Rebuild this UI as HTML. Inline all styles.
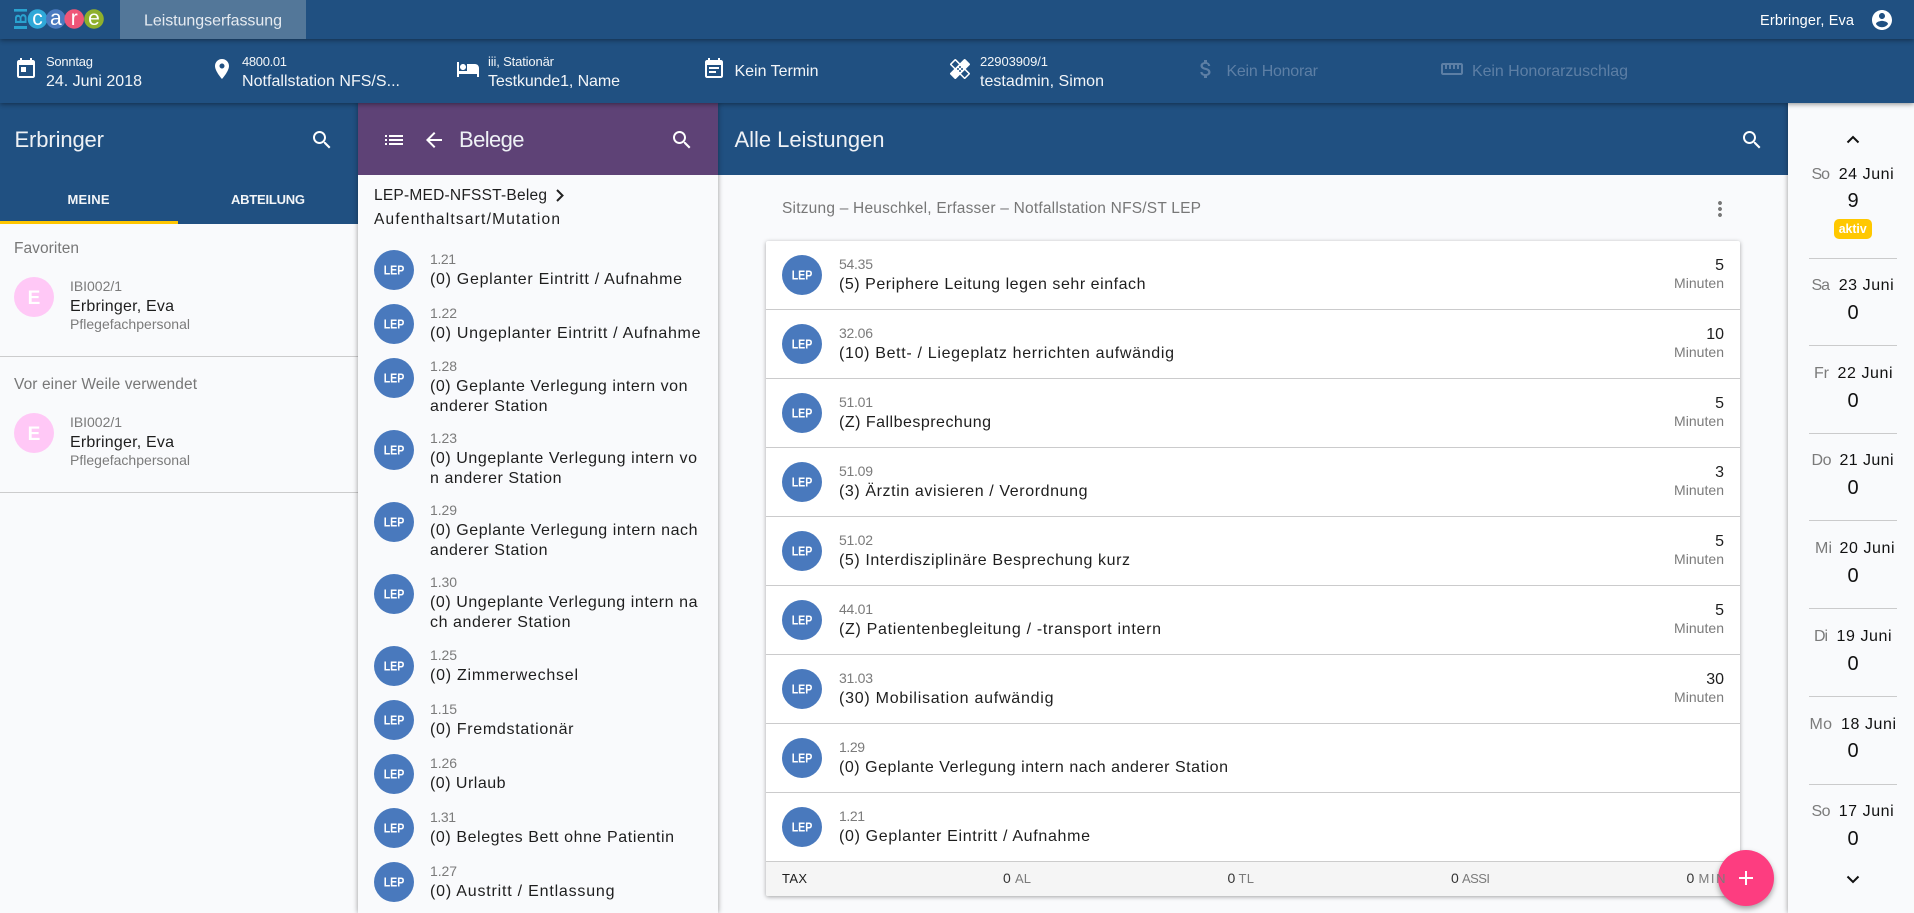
<!DOCTYPE html>
<html lang="de"><head><meta charset="utf-8"><title>Leistungserfassung</title>
<style>
html,body{margin:0;padding:0;width:1914px;height:913px;overflow:hidden;background:#f9fafc;font-family:"Liberation Sans",sans-serif}
.b{position:absolute}
svg.o{position:absolute;left:0;top:0;z-index:20}
text{font-family:"Liberation Sans",sans-serif}
.w{fill:#f2f5f8}.f{fill:#5d7fa5}
.s13{font-size:13px}.s14{font-size:14px}.s15{font-size:15.5px}.s16{font-size:16px}.s20{font-size:20px}.s22{font-size:22px;fill:#eef1f5}
.g{fill:#7b7b7b}.d{fill:#1e1e1e}
.lep{font-size:12.5px;font-weight:bold;fill:#fff;text-anchor:start}
.ic{fill:#fff}
.m{text-anchor:middle}
.e{text-anchor:end}
</style></head><body>
<div class="b" style="left:0;top:0;width:1914px;height:39px;background:#205081;box-shadow:0 1px 5px rgba(0,0,0,.45);z-index:6"></div>
<div class="b" style="left:120px;top:0;width:186px;height:39px;background:#537799;z-index:7"></div>
<div class="b" style="left:0;top:39px;width:1914px;height:64px;background:#205081;box-shadow:0 1px 5px rgba(0,0,0,.45);z-index:5"></div>
<div class="b" style="left:0;top:103px;width:358px;height:121px;background:#205081;z-index:2"></div>
<div class="b" style="left:0;top:221px;width:178px;height:3px;background:#ffc600;z-index:3"></div>
<div class="b" style="left:358px;top:103px;width:360px;height:810px;background:#f9fafc;box-shadow:0 0 5px rgba(0,0,0,.4);z-index:3"></div>
<div class="b" style="left:358px;top:103px;width:360px;height:72px;background:#5e4276;z-index:3"></div>
<div class="b" style="left:718px;top:103px;width:1070px;height:72px;background:#205081;z-index:2"></div>
<div class="b" style="left:1788px;top:103px;width:126px;height:810px;background:#f9fafc;box-shadow:0 0 5px rgba(0,0,0,.4);z-index:3"></div>
<div class="b" style="left:0;top:356px;width:358px;height:1px;background:#cccccd"></div>
<div class="b" style="left:0;top:492px;width:358px;height:1px;background:#cccccd"></div>
<div class="b" style="left:766px;top:241px;width:974px;height:655px;background:#fff;border-radius:2px;box-shadow:0 1px 4px rgba(0,0,0,.35);z-index:1"></div>
<div class="b" style="left:766px;top:861px;width:974px;height:35px;background:#f5f5f5;border-top:1px solid #ccc;box-sizing:border-box;border-radius:0 0 2px 2px;z-index:1"></div>
<div class="b" style="left:1718px;top:850px;width:56px;height:56px;border-radius:50%;background:#fd3d80;box-shadow:0 3px 6px rgba(0,0,0,.35);z-index:10"></div>

<svg class="o" width="1914" height="913" viewBox="0 0 1914 913">
<!-- row dividers -->
<g fill="#cbcbcc"><rect x="766" y="309" width="974" height="1"/><rect x="766" y="378" width="974" height="1"/><rect x="766" y="447" width="974" height="1"/><rect x="766" y="516" width="974" height="1"/><rect x="766" y="585" width="974" height="1"/><rect x="766" y="654" width="974" height="1"/><rect x="766" y="723" width="974" height="1"/><rect x="766" y="792" width="974" height="1"/>
<rect x="1809" y="258" width="88" height="1"/><rect x="1809" y="345" width="88" height="1"/><rect x="1809" y="433" width="88" height="1"/><rect x="1809" y="520" width="88" height="1"/><rect x="1809" y="608" width="88" height="1"/><rect x="1809" y="696" width="88" height="1"/><rect x="1809" y="784" width="88" height="1"/></g>

<!-- logo -->
<g fill="#2aa3d0"><rect x="14" y="9" width="13" height="2.6"/><rect x="14" y="26" width="13" height="3"/>
<text transform="translate(26.5 24) rotate(-90)" font-size="17" font-weight="bold" textLength="10.5" lengthAdjust="spacingAndGlyphs">B</text></g>
<circle cx="37.5" cy="19" r="9.8" fill="#2fa8d8"/><circle cx="55.8" cy="19" r="9.8" fill="#4a7abf"/><circle cx="74.2" cy="19" r="9.8" fill="#ef5578"/><circle cx="94" cy="19" r="9.8" fill="#8fb02c"/>
<g fill="#fff" font-size="21" text-anchor="middle"><text x="37.5" y="25">c</text><text x="55.8" y="25">a</text><text x="74.2" y="25">r</text><text x="94" y="25">e</text></g>

<!-- top bar -->
<text x="144" y="25.5" class="s16" textLength="138" fill="#e6ebf1">Leistungserfassung</text>
<text x="1760" y="25" font-size="14.5" textLength="94" fill="#fff">Erbringer, Eva</text>
<svg x="1870" y="8" width="24" height="24" viewBox="0 0 24 24" class="ic"><path d="M12 2C6.48 2 2 6.48 2 12s4.48 10 10 10 10-4.48 10-10S17.52 2 12 2zm0 3c1.66 0 3 1.34 3 3s-1.34 3-3 3-3-1.34-3-3 1.34-3 3-3zm0 14.2c-2.5 0-4.71-1.28-6-3.22.03-1.99 4-3.08 6-3.08 1.99 0 5.97 1.09 6 3.08-1.29 1.94-3.5 3.22-6 3.22z"/></svg>

<!-- info bar -->
<svg x="14" y="57" width="24" height="24" viewBox="0 0 24 24" class="ic"><path d="M19 3h-1V1h-2v2H8V1H6v2H5c-1.11 0-1.99.9-1.99 2L3 19c0 1.1.89 2 2 2h14c1.1 0 2-.9 2-2V5c0-1.1-.9-2-2-2zm0 16H5V8h14v11zM7 10h5v5H7z"/></svg>
<text x="46" y="66" class="s13 w" textLength="47">Sonntag</text>
<text x="46" y="86" class="s16 w" textLength="96">24. Juni 2018</text>
<svg x="210" y="57" width="24" height="24" viewBox="0 0 24 24" class="ic"><path d="M12 2C8.13 2 5 5.13 5 9c0 5.25 7 13 7 13s7-7.75 7-13c0-3.87-3.13-7-7-7zm0 9.5c-1.38 0-2.5-1.12-2.5-2.5s1.12-2.5 2.5-2.5 2.5 1.12 2.5 2.5-1.12 2.5-2.5 2.5z"/></svg>
<text x="242" y="66" class="s13 w" textLength="45">4800.01</text>
<text x="242" y="86" class="s16 w" textLength="158">Notfallstation NFS/S...</text>
<svg x="456" y="57" width="24" height="24" viewBox="0 0 24 24" class="ic"><path d="M7 13c1.66 0 3-1.34 3-3S8.66 7 7 7s-3 1.34-3 3 1.34 3 3 3zm12-6h-8v7H3V5H1v15h2v-3h18v3h2v-9c0-2.21-1.79-4-4-4z"/></svg>
<text x="488" y="66" class="s13 w" textLength="66">iii, Stationär</text>
<text x="488" y="86" class="s16 w" textLength="132">Testkunde1, Name</text>
<svg x="702" y="57" width="24" height="24" viewBox="0 0 24 24" class="ic"><path d="M17 10H7v2h10v-2zm2-7h-1V1h-2v2H8V1H6v2H5c-1.11 0-1.99.9-1.99 2L3 19c0 1.1.89 2 2 2h14c1.1 0 2-.9 2-2V5c0-1.1-.9-2-2-2zm0 16H5V8h14v11zm-5-5H7v2h7v-2z"/></svg>
<text x="734.5" y="76" class="s16 w" textLength="84">Kein Termin</text>
<svg x="948" y="57" width="24" height="24" viewBox="0 0 24 24" class="ic"><path d="M17.73 12.02l3.98-3.98c.39-.39.39-1.02 0-1.41l-4.34-4.34c-.39-.39-1.02-.39-1.41 0l-3.98 3.98L8 2.29C7.8 2.1 7.55 2 7.29 2c-.25 0-.51.1-.7.29L2.25 6.63c-.39.39-.39 1.02 0 1.41l3.98 3.98L2.25 16c-.39.39-.39 1.02 0 1.41l4.34 4.34c.39.39 1.02.39 1.41 0l3.98-3.98 3.98 3.98c.2.2.45.29.71.29.26 0 .51-.1.71-.29l4.34-4.34c.39-.39.39-1.02 0-1.41l-3.99-3.98zM12 9c.55 0 1 .45 1 1s-.45 1-1 1-1-.45-1-1 .45-1 1-1zm-4.71 1.96L3.66 7.34l3.63-3.63 3.62 3.62-3.62 3.63zM10 13c-.55 0-1-.45-1-1s.45-1 1-1 1 .45 1 1-.45 1-1 1zm2 2c-.55 0-1-.45-1-1s.45-1 1-1 1 .45 1 1-.45 1-1 1zm2-4c.55 0 1 .45 1 1s-.45 1-1 1-1-.45-1-1 .45-1 1-1zm2.66 9.34l-3.63-3.62 3.63-3.63 3.62 3.62-3.62 3.63z"/></svg>
<text x="980" y="66" class="s13 w" textLength="68">22903909/1</text>
<text x="980" y="86" class="s16 w" textLength="124">testadmin, Simon</text>
<svg x="1194" y="57" width="24" height="24" viewBox="0 0 24 24" fill="#5d7fa5"><path d="M11.8 10.9c-2.27-.59-3-1.2-3-2.15 0-1.09 1.01-1.85 2.7-1.85 1.78 0 2.44.85 2.5 2.1h2.21c-.07-1.72-1.12-3.3-3.21-3.81V3h-3v2.16c-1.94.42-3.5 1.68-3.5 3.61 0 2.31 1.91 3.46 4.7 4.13 2.5.6 3 1.48 3 2.41 0 .69-.49 1.79-2.7 1.79-2.06 0-2.87-.92-2.98-2.1h-2.2c.12 2.19 1.76 3.42 3.68 3.83V21h3v-2.15c1.95-.37 3.5-1.5 3.5-3.55 0-2.84-2.43-3.81-4.7-4.4z"/></svg>
<text x="1226.5" y="76" class="s16 f" textLength="91.5">Kein Honorar</text>
<svg x="1440" y="57" width="24" height="24" viewBox="0 0 24 24" fill="#5d7fa5"><path d="M21 6H3c-1.1 0-2 .9-2 2v8c0 1.1.9 2 2 2h18c1.1 0 2-.9 2-2V8c0-1.1-.9-2-2-2zm0 10H3V8h2v4h2V8h2v4h2V8h2v4h2V8h2v4h2V8h2v8z"/></svg>
<text x="1472" y="76" class="s16 f" textLength="156">Kein Honorarzuschlag</text>

<!-- panel headers -->
<text x="14.5" y="147" class="s22" textLength="89.5">Erbringer</text>
<svg x="310" y="128" width="24" height="24" viewBox="0 0 24 24" class="ic"><path d="M15.5 14h-.79l-.28-.27C15.41 12.59 16 11.11 16 9.5 16 5.91 13.09 3 9.5 3S3 5.91 3 9.5 5.91 16 9.5 16c1.61 0 3.09-.59 4.23-1.57l.27.28v.79l5 4.99L20.49 19l-4.99-5zm-6 0C7.01 14 5 11.99 5 9.5S7.01 5 9.5 5 14 7.01 14 9.5 11.99 14 9.5 14z"/></svg>
<text x="67.5" y="204" class="s13" font-weight="bold" fill="#f2f5f8" textLength="42">MEINE</text>
<text x="231" y="204" class="s13" font-weight="bold" fill="#f2f5f8" textLength="74">ABTEILUNG</text>
<svg x="382" y="128" width="24" height="24" viewBox="0 0 24 24" class="ic"><path d="M3 13h2v-2H3v2zm0 4h2v-2H3v2zm0-8h2V7H3v2zm4 4h14v-2H7v2zm0 4h14v-2H7v2zM7 7v2h14V7H7z"/></svg>
<svg x="422" y="128" width="24" height="24" viewBox="0 0 24 24" class="ic"><path d="M20 11H7.83l5.59-5.59L12 4l-8 8 8 8 1.41-1.41L7.83 13H20v-2z"/></svg>
<text x="459" y="147" class="s22" textLength="65.5">Belege</text>
<svg x="670" y="128" width="24" height="24" viewBox="0 0 24 24" class="ic"><path d="M15.5 14h-.79l-.28-.27C15.41 12.59 16 11.11 16 9.5 16 5.91 13.09 3 9.5 3S3 5.91 3 9.5 5.91 16 9.5 16c1.61 0 3.09-.59 4.23-1.57l.27.28v.79l5 4.99L20.49 19l-4.99-5zm-6 0C7.01 14 5 11.99 5 9.5S7.01 5 9.5 5 14 7.01 14 9.5 11.99 14 9.5 14z"/></svg>
<text x="734.5" y="147" class="s22" textLength="150">Alle Leistungen</text>
<svg x="1740" y="128" width="24" height="24" viewBox="0 0 24 24" class="ic"><path d="M15.5 14h-.79l-.28-.27C15.41 12.59 16 11.11 16 9.5 16 5.91 13.09 3 9.5 3S3 5.91 3 9.5 5.91 16 9.5 16c1.61 0 3.09-.59 4.23-1.57l.27.28v.79l5 4.99L20.49 19l-4.99-5zm-6 0C7.01 14 5 11.99 5 9.5S7.01 5 9.5 5 14 7.01 14 9.5 11.99 14 9.5 14z"/></svg>

<!-- col 1 -->
<text x="14" y="253" class="s15" fill="#777" textLength="65">Favoriten</text>
<circle cx="34" cy="297" r="20" fill="#ffc8f6"/><text x="34" y="304" font-size="19" class="m" fill="#fff" font-weight="bold">E</text>
<text x="70" y="291" class="s14 g" textLength="52">IBI002/1</text>
<text x="70" y="311" class="s16 d" textLength="104">Erbringer, Eva</text>
<text x="70" y="329" class="s14 g" textLength="120">Pflegefachpersonal</text>
<text x="14" y="389" class="s15" fill="#777" textLength="183">Vor einer Weile verwendet</text>
<circle cx="34" cy="433" r="20" fill="#ffc8f6"/><text x="34" y="440" font-size="19" class="m" fill="#fff" font-weight="bold">E</text>
<text x="70" y="427" class="s14 g" textLength="52">IBI002/1</text>
<text x="70" y="447" class="s16 d" textLength="104">Erbringer, Eva</text>
<text x="70" y="465" class="s14 g" textLength="120">Pflegefachpersonal</text>

<!-- col 2 -->
<text x="374" y="200" class="s15 d" textLength="173">LEP-MED-NFSST-Beleg</text>
<path d="M557 190l5.5 5.5-5.5 5.5" fill="none" stroke="#222" stroke-width="2"/>
<text x="374" y="224" class="s15 d" textLength="186">Aufenthaltsart/Mutation</text>
<g fill="#4979bd"><circle cx="394" cy="270" r="20"/><circle cx="394" cy="324" r="20"/><circle cx="394" cy="378" r="20"/><circle cx="394" cy="450" r="20"/><circle cx="394" cy="522" r="20"/><circle cx="394" cy="594" r="20"/><circle cx="394" cy="666" r="20"/><circle cx="394" cy="720" r="20"/><circle cx="394" cy="774" r="20"/><circle cx="394" cy="828" r="20"/><circle cx="394" cy="882" r="20"/></g>
<g><text class="lep" x="383.7" y="274.5" textLength="20.6" lengthAdjust="spacingAndGlyphs">LEP</text><text class="lep" x="383.7" y="328.5" textLength="20.6" lengthAdjust="spacingAndGlyphs">LEP</text><text class="lep" x="383.7" y="382.5" textLength="20.6" lengthAdjust="spacingAndGlyphs">LEP</text><text class="lep" x="383.7" y="454.5" textLength="20.6" lengthAdjust="spacingAndGlyphs">LEP</text><text class="lep" x="383.7" y="526.5" textLength="20.6" lengthAdjust="spacingAndGlyphs">LEP</text><text class="lep" x="383.7" y="598.5" textLength="20.6" lengthAdjust="spacingAndGlyphs">LEP</text><text class="lep" x="383.7" y="670.5" textLength="20.6" lengthAdjust="spacingAndGlyphs">LEP</text><text class="lep" x="383.7" y="724.5" textLength="20.6" lengthAdjust="spacingAndGlyphs">LEP</text><text class="lep" x="383.7" y="778.5" textLength="20.6" lengthAdjust="spacingAndGlyphs">LEP</text><text class="lep" x="383.7" y="832.5" textLength="20.6" lengthAdjust="spacingAndGlyphs">LEP</text><text class="lep" x="383.7" y="886.5" textLength="20.6" lengthAdjust="spacingAndGlyphs">LEP</text></g>
<g class="s14 g">
<text x="430" y="264" textLength="26">1.21</text><text x="430" y="318" textLength="27">1.22</text><text x="430" y="371" textLength="27">1.28</text><text x="430" y="443" textLength="27">1.23</text><text x="430" y="515" textLength="27">1.29</text><text x="430" y="587" textLength="27">1.30</text><text x="430" y="660" textLength="27">1.25</text><text x="430" y="714" textLength="27">1.15</text><text x="430" y="768" textLength="27">1.26</text><text x="430" y="822" textLength="26">1.31</text><text x="430" y="876" textLength="27">1.27</text>
</g>
<g class="s16 d">
<text x="430" y="284" textLength="252">(0) Geplanter Eintritt / Aufnahme</text>
<text x="430" y="338" textLength="270.5">(0) Ungeplanter Eintritt / Aufnahme</text>
<text x="430" y="391" textLength="257.5">(0) Geplante Verlegung intern von</text>
<text x="430" y="411" textLength="117.5">anderer Station</text>
<text x="430" y="463" textLength="267">(0) Ungeplante Verlegung intern vo</text>
<text x="430" y="483" textLength="131.5">n anderer Station</text>
<text x="430" y="535" textLength="267.5">(0) Geplante Verlegung intern nach</text>
<text x="430" y="555" textLength="117.5">anderer Station</text>
<text x="430" y="607" textLength="267.5">(0) Ungeplante Verlegung intern na</text>
<text x="430" y="627" textLength="140.5">ch anderer Station</text>
<text x="430" y="680" textLength="148">(0) Zimmerwechsel</text>
<text x="430" y="734" textLength="143.5">(0) Fremdstationär</text>
<text x="430" y="788" textLength="75.5">(0) Urlaub</text>
<text x="430" y="842" textLength="244">(0) Belegtes Bett ohne Patientin</text>
<text x="430" y="896" textLength="184.5">(0) Austritt / Entlassung</text>
</g>

<!-- col 3 -->
<text x="782" y="213" class="s15" fill="#777" textLength="419">Sitzung – Heuschkel, Erfasser – Notfallstation NFS/ST LEP</text>
<svg x="1708" y="197" width="24" height="24" viewBox="0 0 24 24" fill="#777"><path d="M12 8c1.1 0 2-.9 2-2s-.9-2-2-2-2 .9-2 2 .9 2 2 2zm0 2c-1.1 0-2 .9-2 2s.9 2 2 2 2-.9 2-2-.9-2-2-2zm0 6c-1.1 0-2 .9-2 2s.9 2 2 2 2-.9 2-2-.9-2-2-2z"/></svg>
<g fill="#4979bd"><circle cx="802" cy="275" r="20"/><circle cx="802" cy="344" r="20"/><circle cx="802" cy="413" r="20"/><circle cx="802" cy="482" r="20"/><circle cx="802" cy="551" r="20"/><circle cx="802" cy="620" r="20"/><circle cx="802" cy="689" r="20"/><circle cx="802" cy="758" r="20"/><circle cx="802" cy="827" r="20"/></g>
<g><text class="lep" x="791.7" y="279.5" textLength="20.6" lengthAdjust="spacingAndGlyphs">LEP</text><text class="lep" x="791.7" y="348.5" textLength="20.6" lengthAdjust="spacingAndGlyphs">LEP</text><text class="lep" x="791.7" y="417.5" textLength="20.6" lengthAdjust="spacingAndGlyphs">LEP</text><text class="lep" x="791.7" y="486.5" textLength="20.6" lengthAdjust="spacingAndGlyphs">LEP</text><text class="lep" x="791.7" y="555.5" textLength="20.6" lengthAdjust="spacingAndGlyphs">LEP</text><text class="lep" x="791.7" y="624.5" textLength="20.6" lengthAdjust="spacingAndGlyphs">LEP</text><text class="lep" x="791.7" y="693.5" textLength="20.6" lengthAdjust="spacingAndGlyphs">LEP</text><text class="lep" x="791.7" y="762.5" textLength="20.6" lengthAdjust="spacingAndGlyphs">LEP</text><text class="lep" x="791.7" y="831.5" textLength="20.6" lengthAdjust="spacingAndGlyphs">LEP</text></g>
<g class="s14 g">
<text x="839" y="269" textLength="34">54.35</text><text x="839" y="338" textLength="34">32.06</text><text x="839" y="407" textLength="34">51.01</text><text x="839" y="476" textLength="34">51.09</text><text x="839" y="545" textLength="34">51.02</text><text x="839" y="614" textLength="34">44.01</text><text x="839" y="683" textLength="34">31.03</text><text x="839" y="752" textLength="26">1.29</text><text x="839" y="821" textLength="26">1.21</text>
</g>
<g class="s16 d">
<text x="839" y="289" textLength="306.5">(5) Periphere Leitung legen sehr einfach</text>
<text x="839" y="358" textLength="335">(10) Bett- / Liegeplatz herrichten aufwändig</text>
<text x="839" y="427" textLength="152">(Z) Fallbesprechung</text>
<text x="839" y="496" textLength="248.5">(3) Ärztin avisieren / Verordnung</text>
<text x="839" y="565" textLength="291">(5) Interdisziplinäre Besprechung kurz</text>
<text x="839" y="634" textLength="322">(Z) Patientenbegleitung / -transport intern</text>
<text x="839" y="703" textLength="214.5">(30) Mobilisation aufwändig</text>
<text x="839" y="772" textLength="389">(0) Geplante Verlegung intern nach anderer Station</text>
<text x="839" y="841" textLength="251">(0) Geplanter Eintritt / Aufnahme</text>
</g>
<g class="s16 d">
<text class="e" x="1724" y="270">5</text><text class="e" x="1724" y="339">10</text><text class="e" x="1724" y="408">5</text><text class="e" x="1724" y="477">3</text><text class="e" x="1724" y="546">5</text><text class="e" x="1724" y="615">5</text><text class="e" x="1724" y="684">30</text>
</g>
<g class="s14 g">
<text x="1674" y="288" textLength="50">Minuten</text><text x="1674" y="357" textLength="50">Minuten</text><text x="1674" y="426" textLength="50">Minuten</text><text x="1674" y="495" textLength="50">Minuten</text><text x="1674" y="564" textLength="50">Minuten</text><text x="1674" y="633" textLength="50">Minuten</text><text x="1674" y="702" textLength="50">Minuten</text>
</g>
<g class="s13">
<text x="782" y="883" fill="#1e1e1e" textLength="25">TAX</text>
<text x="1003" y="883" fill="#333" font-size="14">0</text><text x="1015" y="883" class="g" textLength="16">AL</text>
<text x="1227.5" y="883" fill="#333" font-size="14">0</text><text x="1238.5" y="883" class="g" textLength="15.5">TL</text>
<text x="1451" y="883" fill="#333" font-size="14">0</text><text x="1462" y="883" class="g" textLength="28">ASSI</text>
<text x="1686.5" y="883" fill="#333" font-size="14">0</text><text x="1698.5" y="883" class="g" textLength="27">MIN</text>
</g>
</svg>

<svg class="o" style="z-index:30" width="1914" height="913" viewBox="0 0 1914 913">
<svg x="1734" y="866" width="24" height="24" viewBox="0 0 24 24" fill="#fff"><path d="M19 13h-6v6h-2v-6H5v-2h6V5h2v6h6v2z"/></svg>
<!-- col 4 -->
<path d="M1847.5 142.5l5.5-5.5 5.5 5.5" fill="none" stroke="#111" stroke-width="2"/>
<path d="M1847.5 876.5l5.5 5.5 5.5-5.5" fill="none" stroke="#111" stroke-width="2"/>
<g class="s16 g">
<text x="1811.5" y="179" textLength="18.5">So</text><text x="1811.5" y="290" textLength="18.5">Sa</text><text x="1814" y="378" textLength="15">Fr</text><text x="1811.5" y="465" textLength="20">Do</text><text x="1815" y="553" textLength="17">Mi</text><text x="1814" y="641" textLength="14">Di</text><text x="1809.5" y="729" textLength="22.5">Mo</text><text x="1811.5" y="816" textLength="19">So</text>
</g>
<g class="s16" fill="#111">
<text x="1838.7" y="179" textLength="55">24 Juni</text><text x="1838.7" y="290" textLength="55">23 Juni</text><text x="1837.5" y="378" textLength="55">22 Juni</text><text x="1839.5" y="465" textLength="54">21 Juni</text><text x="1839.5" y="553" textLength="55">20 Juni</text><text x="1836.5" y="641" textLength="55">19 Juni</text><text x="1841" y="729" textLength="55">18 Juni</text><text x="1838.7" y="816" textLength="55">17 Juni</text>
</g>
<g class="s20 m" fill="#111">
<text x="1853" y="207">9</text><text x="1853" y="319">0</text><text x="1853" y="407">0</text><text x="1853" y="494">0</text><text x="1853" y="582">0</text><text x="1853" y="670">0</text><text x="1853" y="757">0</text><text x="1853" y="845">0</text>
</g>
<rect x="1834" y="219" width="38" height="20" rx="5" fill="#ffc800"/>
<text x="1838.7" y="233" font-size="12.5" fill="#fff" font-weight="bold" textLength="28" lengthAdjust="spacingAndGlyphs">aktiv</text>
</svg>
</body></html>
